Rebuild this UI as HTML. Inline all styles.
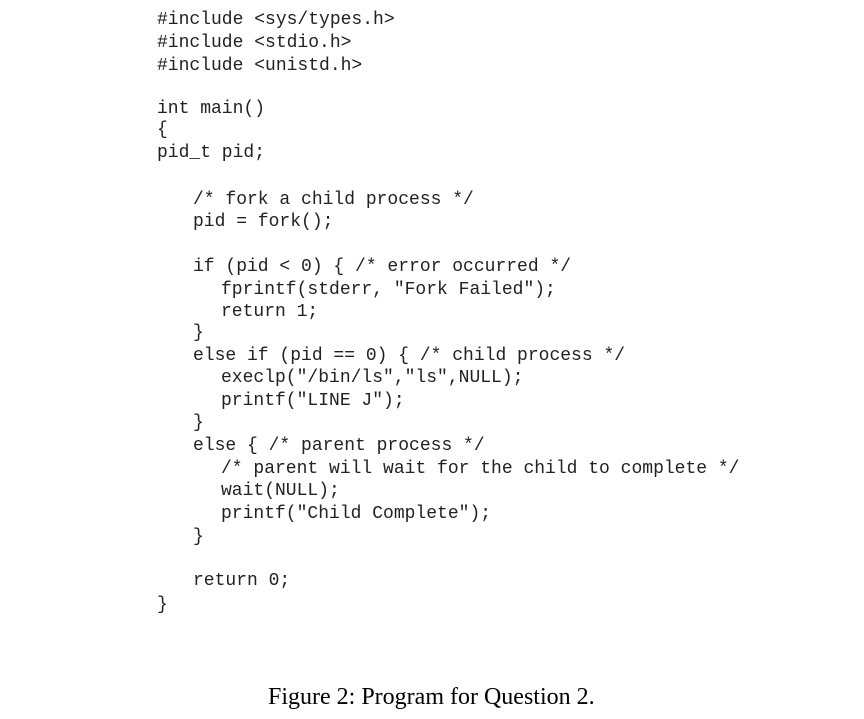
<!DOCTYPE html>
<html><head><meta charset="utf-8"><style>
body{margin:0;width:864px;height:719px;background:#fff;position:relative;overflow:hidden}
.l{position:absolute;font-family:"Liberation Mono",monospace;font-size:18px;line-height:22px;color:#222;white-space:pre;letter-spacing:0px}
.c{position:absolute;left:268px;top:683px;font-family:"Liberation Serif",serif;font-size:24px;line-height:28px;color:#000;white-space:pre}
</style></head><body>
<div class="l" style="left:157px;top:9px">#include &lt;sys/types.h&gt;</div>
<div class="l" style="left:157px;top:32px">#include &lt;stdio.h&gt;</div>
<div class="l" style="left:157px;top:55px">#include &lt;unistd.h&gt;</div>
<div class="l" style="left:157px;top:98px">int main()</div>
<div class="l" style="left:157px;top:119px">{</div>
<div class="l" style="left:157px;top:142px">pid_t pid;</div>
<div class="l" style="left:193px;top:189px">/* fork a child process */</div>
<div class="l" style="left:193px;top:211px">pid = fork();</div>
<div class="l" style="left:193px;top:256px">if (pid &lt; 0) { /* error occurred */</div>
<div class="l" style="left:221px;top:279px">fprintf(stderr, "Fork Failed");</div>
<div class="l" style="left:221px;top:301px">return 1;</div>
<div class="l" style="left:193px;top:322px">}</div>
<div class="l" style="left:193px;top:345px">else if (pid == 0) { /* child process */</div>
<div class="l" style="left:221px;top:367px">execlp("/bin/ls","ls",NULL);</div>
<div class="l" style="left:221px;top:390px">printf("LINE J");</div>
<div class="l" style="left:193px;top:412px">}</div>
<div class="l" style="left:193px;top:435px">else { /* parent process */</div>
<div class="l" style="left:221px;top:458px">/* parent will wait for the child to complete */</div>
<div class="l" style="left:221px;top:480px">wait(NULL);</div>
<div class="l" style="left:221px;top:503px">printf("Child Complete");</div>
<div class="l" style="left:193px;top:526px">}</div>
<div class="l" style="left:193px;top:570px">return 0;</div>
<div class="l" style="left:157px;top:594px">}</div>
<div class="c">Figure 2: Program for Question 2.</div>
</body></html>
